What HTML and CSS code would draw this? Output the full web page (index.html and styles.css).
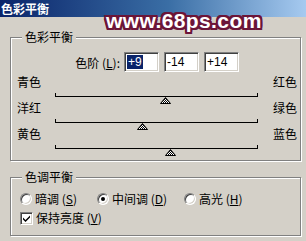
FILE: index.html
```html
<!DOCTYPE html>
<html lang="zh-CN">
<head>
    <meta charset="UTF-8">
    <title>色彩平衡</title>
    <link rel="stylesheet" href="styles.css">
</head>
<body>
    <div class="dialog">
        <div class="titlebar">
            <span class="title">色彩平衡</span>
        </div>
        <div class="watermark">www.68ps.com</div>

        <svg class="defs" width="0" height="0">
            <defs>
                <pattern id="dither" width="2" height="2" patternUnits="userSpaceOnUse">
                    <rect width="2" height="2" fill="#fff"/>
                    <rect width="1" height="1" fill="#000"/>
                    <rect x="1" y="1" width="1" height="1" fill="#000"/>
                </pattern>
            </defs>
        </svg>

        <fieldset class="group group-color">
            <legend>色彩平衡</legend>
            <div class="levels">
                <label class="levels-label">色阶 (<u>L</u>):</label>
                <span class="field"><span class="selected">+9</span></span>
                <span class="field">-14</span>
                <span class="field">+14</span>
            </div>
            <div class="slider">
                <span class="side">青色</span>
                <div class="track">
                    <div class="bar"></div>
                    <svg class="thumb" style="left: 110px" width="11" height="7" viewBox="0 0 11 7"><polygon points="5.5,0.5 10.5,6.5 0.5,6.5" fill="url(#dither)" stroke="#000" stroke-width="1"/></svg>
                </div>
                <span class="side side-right">红色</span>
            </div>
            <div class="slider">
                <span class="side">洋红</span>
                <div class="track">
                    <div class="bar"></div>
                    <svg class="thumb" style="left: 87px" width="11" height="7" viewBox="0 0 11 7"><polygon points="5.5,0.5 10.5,6.5 0.5,6.5" fill="url(#dither)" stroke="#000" stroke-width="1"/></svg>
                </div>
                <span class="side side-right">绿色</span>
            </div>
            <div class="slider">
                <span class="side">黄色</span>
                <div class="track">
                    <div class="bar"></div>
                    <svg class="thumb" style="left: 115px" width="11" height="7" viewBox="0 0 11 7"><polygon points="5.5,0.5 10.5,6.5 0.5,6.5" fill="url(#dither)" stroke="#000" stroke-width="1"/></svg>
                </div>
                <span class="side side-right">蓝色</span>
            </div>
        </fieldset>

        <fieldset class="group group-tone">
            <legend>色调平衡</legend>
            <div class="radios">
                <span class="option opt-shadow"><span class="radio"></span>暗调 (<u>S</u>)</span>
                <span class="option opt-mid"><span class="radio checked"></span>中间调 (<u>D</u>)</span>
                <span class="option"><span class="radio"></span>高光 (<u>H</u>)</span>
            </div>
            <div class="check-row">
                <span class="checkbox">
                    <svg width="11" height="11" viewBox="0 0 11 11"><path d="M2 4.5 L4.5 7 L9 2.5 L9 4.5 L4.5 9 L2 6.5 Z" fill="#000"/></svg>
                </span>
                保持亮度 (<u>V</u>)
            </div>
        </fieldset>
    </div>
</body>
</html>
```

FILE: styles.css
```css
body {
    margin: 0;
    background: #d4d0c8;
    font-family: "Noto Sans CJK SC", "Liberation Sans", sans-serif;
    font-size: 12px;
    color: #000;
}
.dialog {
    position: relative;
    width: 306px;
    height: 241px;
    overflow: hidden;
    background: #d4d0c8;
}
.defs {
    position: absolute;
}
.titlebar {
    height: 17px;
    background: linear-gradient(90deg, #0a246a 0%, #3a6ea5 55%, #a6caf0 100%);
    padding-left: 1px;
}
.title {
    color: #fff;
    font-weight: bold;
    font-size: 12px;
    line-height: 17px;
}
.watermark {
    position: absolute;
    left: 106px;
    top: 9px;
    font-family: "Liberation Sans", Arial, sans-serif;
    font-weight: bold;
    font-size: 21px;
    letter-spacing: 0.4px;
    color: #fff;
    text-shadow:
        -2px 0 0 #6b1538, 2px 0 0 #6b1538, 0 -2px 0 #6b1538, 0 2px 0 #6b1538,
        -2px -2px 0 #6b1538, 2px 2px 0 #6b1538, -2px 2px 0 #6b1538, 2px -2px 0 #6b1538,
        -1px -2px 0 #6b1538, 1px 2px 0 #6b1538, -2px 1px 0 #6b1538, 2px -1px 0 #6b1538;
}
.group {
    margin: 0 5px 0 10px;
    padding: 0;
    border: 1px solid #808080;
    box-shadow: 1px 1px 0 #fff, inset 1px 1px 0 #fff;
    min-width: 0;
}
.group legend {
    margin-left: 11px;
    padding: 0 3px;
    line-height: 14px;
    background: #d4d0c8;
}
.group-color {
    margin-top: 13px;
    padding-bottom: 8px;
}
.group-tone {
    margin-top: 9px;
    padding-bottom: 10px;
}
.levels {
    display: flex;
    align-items: center;
    gap: 5px;
    padding: 8px 0 0 57px;
    margin-bottom: 2px;
}
.levels-label {
    width: 52px;
    text-align: right;
    margin-right: -1px;
}
.field {
    box-sizing: border-box;
    width: 35px;
    height: 20px;
    padding: 2px 0 0 2px;
    background: #fff;
    border: 1px solid;
    border-color: #808080 #fff #fff #808080;
    box-shadow: inset 1px 1px 0 #404040, inset -1px -1px 0 #d4d0c8;
    font-family: "Liberation Sans", Arial, sans-serif;
    font-size: 12px;
    line-height: 14px;
}
.selected {
    background: #0a246a;
    color: #fff;
    padding: 0 1px;
}
.slider {
    display: grid;
    grid-template-columns: 38px 203px auto;
    height: 26px;
    padding-left: 6px;
}
.side {
    line-height: 14px;
    margin-top: 1px;
}
.side-right {
    margin-left: 15px;
}
.track {
    position: relative;
}
.bar {
    margin-top: 19px;
    height: 3px;
    border: 1px solid #000;
    border-top: none;
}
.thumb {
    position: absolute;
    top: 23px;
    margin-left: -5px;
    display: block;
}
.radios {
    display: flex;
    align-items: center;
    padding: 8px 0 0 9px;
    line-height: 14px;
}
.option {
    display: flex;
    align-items: center;
}
.opt-shadow {
    width: 77px;
}
.opt-mid {
    width: 87px;
}
.radio {
    box-sizing: border-box;
    width: 12px;
    height: 12px;
    margin-right: 3px;
    border-radius: 50%;
    background: #fff;
    border: 1px solid;
    border-color: #808080 #fff #fff #808080;
    box-shadow: inset 1px 1px 0 #404040, inset -1px -1px 0 #d4d0c8;
    position: relative;
}
.radio.checked::after {
    content: "";
    position: absolute;
    left: 3px;
    top: 3px;
    width: 4px;
    height: 4px;
    border-radius: 50%;
    background: #000;
}
.check-row {
    display: flex;
    align-items: center;
    padding: 5px 0 0 9px;
    line-height: 14px;
}
.checkbox {
    box-sizing: border-box;
    width: 13px;
    height: 13px;
    margin-right: 3px;
    background: #fff;
    border: 1px solid;
    border-color: #808080 #fff #fff #808080;
    box-shadow: inset 1px 1px 0 #404040, inset -1px -1px 0 #d4d0c8;
    display: flex;
    align-items: center;
    justify-content: center;
}
.checkbox svg {
    display: block;
}
```
